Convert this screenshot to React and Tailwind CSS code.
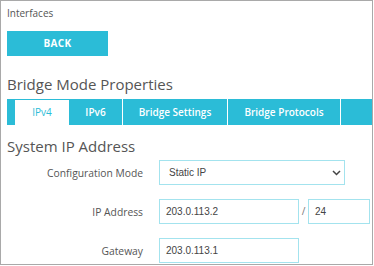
export default function App() {
    const labelCls = "w-[136px] text-right text-[10.3px] leading-[14px] text-[#555]";
    const inputCls = "h-[25px] border border-[#a3e3ee] flex items-center text-[10px] text-[#444] [font-family:'Liberation_Sans',Arial,sans-serif]";

    return (
        <div className="w-[373px] h-[265px] bg-white border border-[#a9a9a9] overflow-hidden pl-[6px] font-['Open_Sans',sans-serif]">
            <div className="pt-[5px] text-[10px] text-[#555] leading-[14px]">Interfaces</div>

            <button className="mt-[11px] w-[101px] h-[25px] bg-[#2bbcd7] text-white font-bold text-[10px] tracking-[0.3px] block">
                BACK
            </button>

            <h1 className="mt-[18px] text-[15px] leading-[20px] text-[#555]">Bridge Mode Properties</h1>

            {/* Tabs */}
            <div className="mt-[5px] flex h-[26px] bg-[#2bbcd7] text-[10px] font-semibold text-white">
                <div className="w-[8px]" />
                <div className="w-[54px] mt-[1px] bg-white text-[#2bbcd7] font-normal flex items-center justify-center">IPv4</div>
                <div className="w-[54px] flex items-center justify-center border-r border-white">IPv6</div>
                <div className="w-[105px] flex items-center justify-center border-r border-white">Bridge Settings</div>
                <div className="w-[113px] flex items-center justify-center border-r border-white">Bridge Protocols</div>
                <div className="flex-1" />
            </div>

            <h2 className="mt-[11px] text-[15px] leading-[20px] text-[#555]">System IP Address</h2>

            <div className="mt-[4px] flex flex-col gap-[14px]">
                <div className="flex items-center gap-[16px]">
                    <div className={labelCls}>Configuration Mode</div>
                    <div className={`${inputCls} w-[186px] pl-[9px] pr-[3px] justify-between`}>
                        <span>Static IP</span>
                        <svg width="9" height="6" viewBox="0 0 9 6">
                            <path d="M1 1 L4.5 4.5 L8 1" fill="none" stroke="#444" strokeWidth="1.5" />
                        </svg>
                    </div>
                </div>

                <div className="flex items-center gap-[16px]">
                    <div className={labelCls}>IP Address</div>
                    <div className="flex items-center">
                        <div className={`${inputCls} w-[140px] pl-[6px]`}>203.0.113.2</div>
                        <span className="w-[9px] text-center text-[10px] text-[#777]">/</span>
                        <div className={`${inputCls} w-[62px] pl-[6px]`}>24</div>
                    </div>
                </div>

                <div className="flex items-center gap-[16px]">
                    <div className={labelCls}>Gateway</div>
                    <div className={`${inputCls} w-[140px] pl-[6px]`}>203.0.113.1</div>
                </div>
            </div>
        </div>
    );
}
